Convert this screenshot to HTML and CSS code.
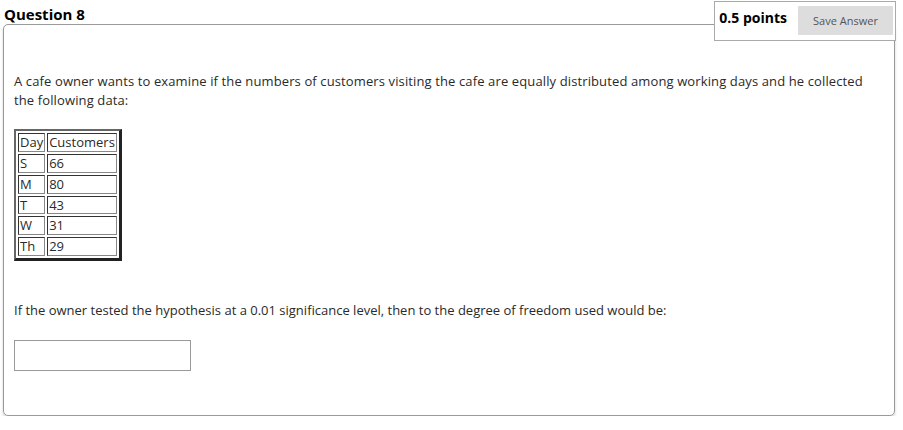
FILE: index.html
```html
<!DOCTYPE html>
<html>
<head>
<meta charset="utf-8">
<link rel="stylesheet" href="styles.css">
</head>
<body>
<div class="question">
  <div class="q-header">
    <h2 class="q-title">Question 8</h2>
    <div class="points-box">
      <span class="points">0.5 points</span>
      <button class="save-btn" type="button">Save Answer</button>
    </div>
  </div>
  <div class="q-body">
    <p class="q-text q-intro">A cafe owner wants to examine if the numbers of customers visiting the cafe are equally distributed among working days and he collected the following data:</p>
    <table class="data-table">
      <tr><td>Day</td><td>Customers</td></tr>
      <tr><td>S</td><td>66</td></tr>
      <tr><td>M</td><td>80</td></tr>
      <tr><td>T</td><td>43</td></tr>
      <tr><td>W</td><td>31</td></tr>
      <tr><td>Th</td><td>29</td></tr>
    </table>
    <p class="q-text q-prompt">If the owner tested the hypothesis at a 0.01 significance level, then to the degree of freedom used would be:</p>
    <input class="answer" type="text">
  </div>
</div>
</body>
</html>
```

FILE: styles.css
```css
html, body {
  margin: 0;
  padding: 0;
  background: #fff;
}
body {
  font-family: "Open Sans", "Liberation Sans", sans-serif;
  color: #333;
}
.question {
  padding: 0 8px 0 3px;
}
.q-header {
  display: flex;
  justify-content: space-between;
  align-items: flex-start;
  padding-top: 1px;
}
.q-title {
  margin: 4px 0 0 1px;
  font-size: 15px;
  line-height: 19px;
  font-weight: 700;
  color: #000;
}
.points-box {
  position: relative;
  z-index: 1;
  display: flex;
  align-items: flex-start;
  gap: 11px;
  box-sizing: border-box;
  height: 40px;
  margin: 0 -1px -17px 0;
  padding: 4px 2px 4px 4px;
  border: 1px solid #aaa;
  background: #fff;
}
.points {
  font-size: 14px;
  font-weight: 700;
  line-height: 21px;
  color: #000;
  padding-top: 1px;
}
.save-btn {
  width: 95px;
  height: 29px;
  border: 0;
  border-radius: 1px;
  background: #ddd;
  color: #555;
  font-family: "Open Sans", "Liberation Sans", sans-serif;
  font-size: 11px;
  padding: 0;
}
.q-body {
  border: 1px solid #999;
  border-radius: 5px;
  box-shadow: 0 2px 3px rgba(0, 0, 0, 0.18);
  padding: 47px 10px 44px 10px;
}
.q-text {
  margin: 0 0 20px 0;
  font-size: 13px;
  line-height: 18.6px;
  color: #2a2a2a;
}
.q-intro {
  letter-spacing: 0.12px;
}
.q-prompt {
  margin: 40px 0 20px 0;
}
.data-table {
  border-collapse: separate;
  border-spacing: 2px;
  border-style: solid;
  border-width: 2px 3px 3px 2px;
  border-color: #666 #222 #222 #666;
  font-size: 13px;
  color: #2a2a2a;
}
.data-table td {
  padding: 1px;
  line-height: 14.8px;
  border: 1px solid;
  border-color: #333 #888 #888 #333;
  text-align: left;
}
.answer {
  display: block;
  box-sizing: border-box;
  width: 177px;
  height: 31px;
  margin: 0;
  border: 1px solid #999;
  padding: 2px 4px;
  font-family: "Open Sans", "Liberation Sans", sans-serif;
  font-size: 13px;
}
```
